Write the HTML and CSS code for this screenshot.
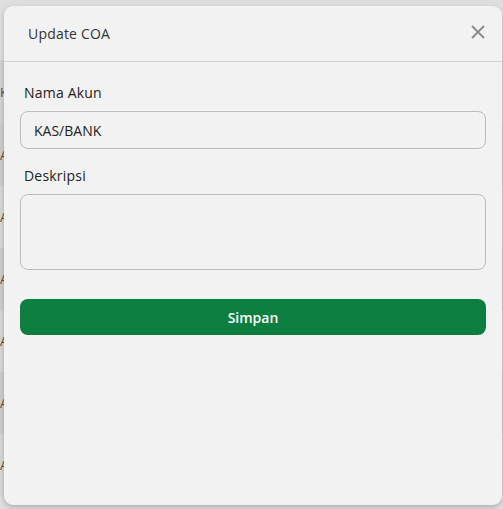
FILE: index.html
```html
<!DOCTYPE html>
<html lang="id">
<head>
<meta charset="utf-8">
<title>Update COA</title>
<link rel="stylesheet" href="styles.css">
</head>
<body>
<div class="page">
  <div class="row row-head"><span class="cell">K</span></div>
  <div class="row"><span class="cell">A</span></div>
  <div class="row alt"><span class="cell">A</span></div>
  <div class="row"><span class="cell">A</span></div>
  <div class="row alt"><span class="cell">A</span></div>
  <div class="row"><span class="cell">A</span></div>
  <div class="row alt"><span class="cell">A</span></div>
</div>
<div class="modal">
  <div class="modal-header">
    <h2 class="modal-title">Update COA</h2>
    <button class="close" type="button" aria-label="Tutup">
      <svg width="16" height="16" viewBox="0 0 16 16"><path d="M2 2L14 14M14 2L2 14" stroke="#8a8a8a" stroke-width="1.8" fill="none"/></svg>
    </button>
  </div>
  <form class="modal-body">
    <label class="field">
      <span class="label">Nama Akun</span>
      <input class="input" type="text" value="KAS/BANK">
    </label>
    <label class="field">
      <span class="label">Deskripsi</span>
      <textarea class="input textarea"></textarea>
    </label>
    <button class="submit" type="button">Simpan</button>
  </form>
</div>
</body>
</html>
```
FILE: styles.css
```css
* { box-sizing: border-box; }
html, body { margin: 0; padding: 0; }
body {
  width: 503px;
  height: 509px;
  overflow: hidden;
  background: #dedede;
  font-family: "Open Sans", "Noto Sans", sans-serif;
  position: relative;
}
.page {
  padding-top: 60px;
  display: flex;
  flex-direction: column;
}
.row {
  height: 62px;
  background: #cdcdcd;
  display: flex;
  align-items: center;
}
.row.alt { background: #d6d6d6; }
.row-head { height: 64px; background: #d3d3d3; }
.cell {
  margin-left: 0;
  font-size: 13px;
  color: #6b4a1a;
}
.modal {
  position: absolute;
  left: 4px;
  top: 6px;
  width: 498px;
  height: 499px;
  background: #f2f2f2;
  border-radius: 9px;
  box-shadow: 0 2px 5px rgba(0,0,0,0.22);
}
.modal-header {
  height: 56px;
  border-bottom: 1px solid #d2d2d2;
  display: flex;
  align-items: center;
  justify-content: space-between;
  padding: 0 16px 0 24px;
}
.modal-title {
  margin: 0;
  font-size: 14px;
  font-weight: 400;
  color: #333;
  letter-spacing: 0.2px;
}
.close {
  border: 0;
  background: none;
  padding: 0;
  width: 16px;
  height: 16px;
  display: flex;
  margin-top: -3px;
}
.modal-body {
  padding: 21px 16px 0 16px;
  display: flex;
  flex-direction: column;
}
.field {
  display: flex;
  flex-direction: column;
}
.label {
  font-size: 14px;
  color: #222;
  padding-left: 4px;
  line-height: 20px;
  margin-bottom: 8px;
  letter-spacing: 0.2px;
}
.input {
  width: 466px;
  height: 38px;
  border: 1px solid #bcbcbc;
  border-radius: 8px;
  background: #f2f2f2;
  padding: 0 13px;
  font-family: inherit;
  font-size: 14px;
  color: #222;
  margin-bottom: 17px;
}
.textarea {
  height: 76px;
  resize: none;
  margin-bottom: 29px;
}
.submit {
  width: 466px;
  height: 36px;
  border: 0;
  border-radius: 8px;
  background: #0c7e3f;
  color: #fff;
  font-family: inherit;
  font-size: 14px;
  font-weight: 600;
}
```
